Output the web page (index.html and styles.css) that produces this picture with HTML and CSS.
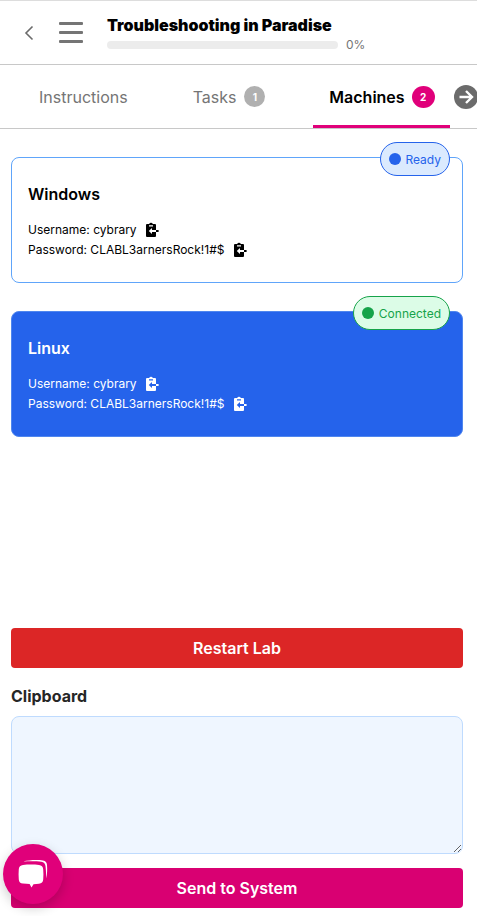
FILE: index.html
```html
<!DOCTYPE html>
<html lang="en">
<head>
    <meta charset="UTF-8">
    <meta name="viewport" content="width=device-width, initial-scale=1.0">
    <title>Troubleshooting in Paradise</title>
    <link rel="stylesheet" href="styles.css">
</head>
<body>
    <svg class="sprite" width="0" height="0">
        <symbol id="paste-go" viewBox="1 0 13 15">
            <path fill-rule="evenodd" d="M2 2h2.200a1.900 1.900 0 0 1 3.600 0H10a1 1 0 0 1 1 1v11a1 1 0 0 1-1 1H2a1 1 0 0 1-1-1V3a1 1 0 0 1 1-1zM4 3.200h4v1.300H4zM3.800 9 7 5.900V8h4v2H7v2.100z"/>
            <path d="M11 8h2.600v2H11z"/>
        </symbol>
    </svg>

    <header class="topbar">
        <button class="back" aria-label="Back">
            <svg width="10" height="16" viewBox="0 0 10 16"><path d="M8.500 1.500 2 8l6.500 6.500" fill="none" stroke="#6b6b6b" stroke-width="1.600"/></svg>
        </button>
        <button class="menu" aria-label="Menu">
            <span></span><span></span><span></span>
        </button>
        <div class="course">
            <div class="course-title">Troubleshooting in Paradise</div>
            <div class="progress-row">
                <div class="progress"></div>
                <span class="progress-text">0%</span>
            </div>
        </div>
    </header>

    <nav class="tabs">
        <div class="tab tab-instructions">Instructions</div>
        <div class="tab tab-tasks">Tasks <span class="count">1</span></div>
        <div class="tab tab-machines">Machines <span class="count count-active">2</span></div>
        <div class="tab-next">
            <svg width="24" height="24" viewBox="0 0 24 24"><circle cx="12" cy="12" r="12" fill="#6b6b6b"/><path d="M5.500 12h12M12 6l6 6-6 6" fill="none" stroke="#fff" stroke-width="2.400"/></svg>
        </div>
    </nav>

    <main class="content">
        <div class="machine">
            <span class="status status-ready"><i class="dot"></i>Ready</span>
            <h2 class="machine-name">Windows</h2>
            <div class="cred">Username: cybrary
                <svg class="copy"><use href="#paste-go"/></svg>
            </div>
            <div class="cred">Password: CLABL3arnersRock!1#$
                <svg class="copy"><use href="#paste-go"/></svg>
            </div>
        </div>

        <div class="machine machine-active">
            <span class="status status-connected"><i class="dot"></i>Connected</span>
            <h2 class="machine-name">Linux</h2>
            <div class="cred">Username: cybrary
                <svg class="copy"><use href="#paste-go"/></svg>
            </div>
            <div class="cred">Password: CLABL3arnersRock!1#$
                <svg class="copy"><use href="#paste-go"/></svg>
            </div>
        </div>

        <div class="actions">
            <button class="btn btn-red">Restart Lab</button>
            <label class="clip-label" for="clip">Clipboard</label>
            <textarea class="clip" id="clip"></textarea>
            <button class="btn btn-pink">Send to System</button>
        </div>
    </main>

    <button class="chat" aria-label="Chat">
        <svg width="32" height="32" viewBox="0 0 32 32">
            <path d="M6 3.500C12 2 20 1.600 26 2.500c2.600.4 3.800 2 4 4.500.4 4.500.2 9-.8 13.500-.1-4.500-.2-8.500-.7-12.500-.3-2.500-1.700-3.900-4.200-4.300C19.500 3 12 3 6 3.500z" fill="#fff"/>
            <path d="M6 7c5-.6 11-.6 16 0 2.600.3 4 1.800 4.200 4.200.3 3.400.3 7 0 10.400-.2 2.400-1.600 3.900-4.200 4.200-1.800.2-3.700.4-5.500.4L14.500 29.500 12.600 26c-2 0-4.300-.2-6.600-.4-2.600-.3-4-1.800-4.200-4.200-.3-3.400-.3-7 0-10.400C2 9 3.400 7.300 6 7z" fill="#fff"/>
        </svg>
    </button>
</body>
</html>
```

FILE: styles.css
```css
* {
    box-sizing: border-box;
}
body {
    margin: 0;
    height: 916px;
    overflow: hidden;
    background-color: #FFFFFF;
    font-family: Inter, Arial, sans-serif;
    color: #000000;
    display: flex;
    flex-direction: column;
}
button {
    font-family: inherit;
    border: none;
    background: none;
    padding: 0;
}
.sprite {
    position: absolute;
}
.topbar {
    height: 65px;
    flex: none;
    border-top: 1px solid #dddddd;
    border-bottom: 1px solid #c8c8c8;
    display: flex;
    align-items: center;
    padding-left: 24px;
}
.back {
    display: flex;
    width: 10px;
}
.menu {
    margin-left: 25px;
    width: 24px;
    display: flex;
    flex-direction: column;
    gap: 6px;
}
.menu span {
    display: block;
    height: 3px;
    border-radius: 1px;
    background-color: #757575;
}
.course {
    margin-left: 24px;
}
.course-title {
    font-size: 16px;
    font-weight: 900;
    line-height: 20px;
    margin-top: 1px;
    margin-bottom: 3px;
}
.progress-row {
    display: flex;
    align-items: center;
    gap: 8px;
}
.progress {
    width: 231px;
    height: 8px;
    border-radius: 4px;
    background-color: #ececec;
}
.progress-text {
    font-size: 12px;
    line-height: 14px;
    color: #757575;
}
.tabs {
    height: 64px;
    flex: none;
    border-bottom: 1px solid #c8c8c8;
    display: flex;
    align-items: center;
    position: relative;
}
.tab {
    height: 100%;
    display: flex;
    align-items: center;
    flex: none;
    font-size: 16px;
    color: #757575;
    white-space: nowrap;
}
.tab-instructions {
    margin-left: 39px;
}
.tab-tasks {
    margin-left: 65px;
    gap: 8px;
}
.tab-machines {
    margin-left: 48px;
    width: 137px;
    justify-content: center;
    gap: 7px;
    color: #000000;
    font-weight: 600;
    border-bottom: 3px solid #e0007a;
    padding-top: 3px;
}
.count {
    width: 21px;
    height: 21px;
    border-radius: 50%;
    background-color: #b0b0b0;
    color: #FFFFFF;
    font-size: 10px;
    font-weight: 700;
    display: flex;
    align-items: center;
    justify-content: center;
}
.count-active {
    width: 23px;
    height: 22px;
    background-color: #e0007a;
}
.tab-next {
    flex: none;
    margin-left: 4px;
    display: flex;
}
.content {
    flex: 1;
    padding: 28px 14px 8px 11px;
    display: flex;
    flex-direction: column;
}
.machine {
    position: relative;
    height: 126px;
    border: 1px solid #60a5fa;
    border-radius: 8px;
    padding: 26px 16px 0;
    margin-bottom: 28px;
}
.machine-active {
    background-color: #2563eb;
    color: #FFFFFF;
    border-color: #4f86ee;
}
.machine-name {
    margin: 0 0 16px;
    font-size: 16px;
    line-height: 20px;
    font-weight: 600;
}
.cred {
    font-size: 12px;
    line-height: 20px;
    display: flex;
    align-items: center;
    gap: 9.5px;
}
.copy {
    width: 13px;
    height: 15px;
    margin-top: -2px;
    fill: currentColor;
}
.status {
    position: absolute;
    top: -16px;
    right: 12px;
    height: 34px;
    border-radius: 17px;
    border: 1px solid;
    padding: 0 8px;
    display: flex;
    align-items: center;
    gap: 4px;
    font-size: 12px;
}
.dot {
    width: 12px;
    height: 12px;
    border-radius: 50%;
}
.status-ready {
    background-color: #dbeafe;
    border-color: #2563eb;
    color: #2563eb;
}
.status-ready .dot {
    background-color: #2563eb;
}
.status-connected {
    gap: 5px;
    background-color: #dcfce7;
    border-color: #16a34a;
    color: #16a34a;
}
.status-connected .dot {
    background-color: #16a34a;
}
.actions {
    margin-top: auto;
    display: flex;
    flex-direction: column;
}
.btn {
    height: 40px;
    border-radius: 4px;
    color: #FFFFFF;
    font-size: 16px;
    font-weight: 600;
}
.btn-red {
    background-color: #dc2626;
}
.btn-pink {
    background-color: #d90072;
}
.clip-label {
    margin-top: 18px;
    margin-bottom: 10px;
    font-size: 16px;
    line-height: 20px;
    font-weight: 700;
    color: #262626;
}
.clip {
    display: block;
    width: 100%;
    height: 138px;
    margin-bottom: 14px;
    background-color: #eff6ff;
    border: 1px solid #bfdbfe;
    border-radius: 8px;
}
.chat {
    position: absolute;
    left: 3px;
    top: 844px;
    width: 60px;
    height: 60px;
    border-radius: 50%;
    background-color: #e0007a;
    box-shadow: 0 4px 12px rgba(0, 0, 0, 0.2);
    display: flex;
    align-items: center;
    justify-content: center;
}
```
